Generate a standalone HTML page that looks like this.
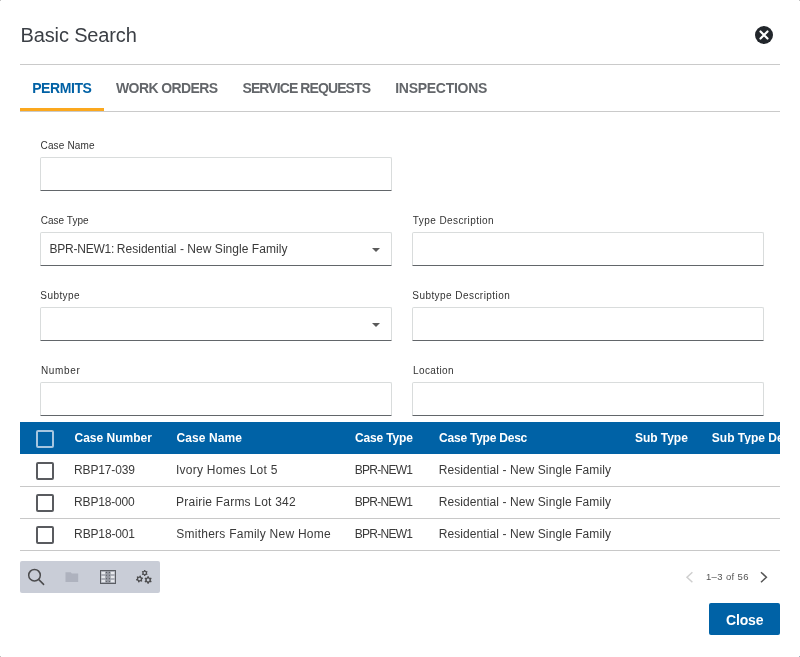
<!DOCTYPE html>
<html lang="en">
<head>
<meta charset="utf-8">
<title>Basic Search</title>
<style>
*{box-sizing:border-box;margin:0;padding:0}
html,body{width:800px;height:657px;overflow:hidden;background:#aaa;font-family:"Liberation Sans",sans-serif;}
#dlg{position:absolute;left:0;top:0;width:800px;height:657px;background:#fff;overflow:hidden}
.cp{position:absolute;width:1px;height:1px;background:#c2c2c2}
.abs{position:absolute;white-space:nowrap;line-height:1}
#txt{position:absolute;left:0;top:0;width:800px;height:657px;will-change:transform}
.ttl{color:#3b3f45}
#hline{left:20px;top:64px;width:760px;height:1px;background:#cacaca}
#tabline{left:20px;top:111px;width:760px;height:1px;background:#cacaca}
#tabul{left:20px;top:108px;width:84px;height:3px;background:#fba81e}
.tab{font-weight:bold;color:#63666a}
.tab.on{color:#0061a5}
.lbl{color:#333}
.inp{position:absolute;width:352px;height:34px;border:1px solid #d9dcdc;border-bottom:1px solid #62666a;border-radius:2px 2px 1px 1px;background:#fff}
.val{color:#3a3a3a}
.caret{position:absolute;width:0;height:0;border-left:4px solid transparent;border-right:4px solid transparent;border-top:4px solid #5a5a5a}
#thead{left:20px;top:422px;width:760px;height:32px;background:#0062a6;overflow:hidden}
.th{font-weight:bold;color:#fff}
.td{color:#3a3a3a}
.rline{left:20px;width:760px;height:1px;background:#c8c8c8}
.cb{position:absolute;left:36px;width:18px;height:18px;border:2px solid #595b5f;border-radius:2px;background:#fff}
.cb.h{border-color:#a6c6e0;background:transparent}
#tools{left:20px;top:561px;width:140px;height:32px;background:#c9cdd7;border-radius:2px}
#closebtn{left:709px;top:603px;width:71px;height:32px;background:#0062a6;border-radius:2px}
.pg{color:#555}
.cbt{color:#fff;font-weight:bold}
</style>
</head>
<body>
<div id="dlg">
<div class="cp" style="left:0;top:0"></div><div class="cp" style="left:799px;top:0"></div><div class="cp" style="left:0;top:656px"></div><div class="cp" style="left:799px;top:656px;background:#a3b2be"></div>
<svg class="abs" style="left:754px;top:25px" width="20" height="20" viewBox="0 0 20 20"><circle cx="10" cy="10" r="9" fill="#22262b"/><path d="M6.5 6.5 L13.5 13.5 M13.5 6.5 L6.5 13.5" stroke="#fff" stroke-width="2.2" stroke-linecap="round"/></svg>
<div class="abs" id="hline"></div>
<div class="abs" id="tabline"></div>
<div class="abs" id="tabul"></div>

<div class="inp" style="left:40px;top:157px"></div>

<div class="inp" style="left:40px;top:232px"></div>
<div class="caret" style="left:372px;top:248px"></div>
<div class="inp" style="left:412px;top:232px"></div>

<div class="inp" style="left:40px;top:307px"></div>
<div class="caret" style="left:372px;top:323px"></div>
<div class="inp" style="left:412px;top:307px"></div>

<div class="inp" style="left:40px;top:382px"></div>
<div class="inp" style="left:412px;top:382px"></div>

<div class="abs" id="thead"></div>
<div class="cb h" style="top:430px"></div>

<div class="cb" style="top:462px"></div>
<div class="abs rline" style="top:486px"></div>

<div class="cb" style="top:494px"></div>
<div class="abs rline" style="top:518px"></div>

<div class="cb" style="top:526px"></div>
<div class="abs rline" style="top:550px"></div>

<div class="abs" id="tools"></div>
<svg class="abs" style="left:20px;top:561px" width="140" height="32" viewBox="0 0 140 32">
<g fill="none" stroke="#4b4b4d" stroke-width="1.5"><circle cx="14.5" cy="14.2" r="5.8"/><path d="M18.8 18.6 L23.6 23.4" stroke-linecap="round"/></g>
<path d="M45.5 11.2 h5.2 l1.2 1.2 h6.3 v8.6 h-12.7 z" fill="#aeb2be"/>
<g><rect x="80.5" y="9.5" width="15" height="13" fill="#adb0b9" stroke="#5a5d63" stroke-width="1"/>
<rect x="85.5" y="10" width="5" height="12" fill="#9699a2"/><rect x="81.5" y="11" width="3.6" height="2" fill="#e6e8ec"/><rect x="90.8" y="11" width="3.6" height="2" fill="#e6e8ec"/><rect x="81.5" y="15" width="3.6" height="2" fill="#e6e8ec"/><rect x="90.8" y="15" width="3.6" height="2" fill="#e6e8ec"/><rect x="81.5" y="19" width="3.6" height="2" fill="#e6e8ec"/><rect x="90.8" y="19" width="3.6" height="2" fill="#e6e8ec"/><circle cx="86.4" cy="11.4" r="0.55" fill="#55585e"/><circle cx="89.4" cy="11.4" r="0.55" fill="#55585e"/><circle cx="86.4" cy="14.3" r="0.55" fill="#55585e"/><circle cx="89.4" cy="14.3" r="0.55" fill="#55585e"/><circle cx="86.4" cy="17.6" r="0.55" fill="#55585e"/><circle cx="89.4" cy="17.6" r="0.55" fill="#55585e"/><circle cx="86.4" cy="20.5" r="0.55" fill="#55585e"/><circle cx="89.4" cy="20.5" r="0.55" fill="#55585e"/></g>
<path fill="#4b4b4d" fill-rule="evenodd" d="M123.95 9.83 L124.16 8.95 L125.24 8.95 L125.45 9.83 L126.21 10.26 L127.07 10.01 L127.61 10.94 L126.96 11.56 L126.96 12.44 L127.61 13.06 L127.07 13.99 L126.21 13.74 L125.45 14.17 L125.24 15.05 L124.16 15.05 L123.95 14.17 L123.19 13.74 L122.33 13.99 L121.79 13.06 L122.44 12.44 L122.44 11.56 L121.79 10.94 L122.33 10.01 L123.19 10.26Z M123.55 12.00 a1.15 1.15 0 1 0 2.3 0 a1.15 1.15 0 1 0 -2.3 0Z M119.32 15.41 L119.81 14.51 L120.98 14.83 L120.95 15.84 L121.66 16.55 L122.67 16.52 L122.99 17.69 L122.09 18.18 L121.84 19.14 L122.37 20.01 L121.51 20.87 L120.64 20.34 L119.68 20.59 L119.19 21.49 L118.02 21.17 L118.05 20.16 L117.34 19.45 L116.33 19.48 L116.01 18.31 L116.91 17.82 L117.16 16.86 L116.63 15.99 L117.49 15.13 L118.36 15.66Z M118.20 18.00 a1.3 1.3 0 1 0 2.6 0 a1.3 1.3 0 1 0 -2.6 0Z M127.19 16.35 L127.44 15.26 L128.76 15.26 L129.01 16.35 L129.94 16.89 L131.01 16.56 L131.67 17.70 L130.85 18.47 L130.85 19.53 L131.67 20.30 L131.01 21.44 L129.94 21.11 L129.01 21.65 L128.76 22.74 L127.44 22.74 L127.19 21.65 L126.26 21.11 L125.19 21.44 L124.53 20.30 L125.35 19.53 L125.35 18.47 L124.53 17.70 L125.19 16.56 L126.26 16.89Z M126.70 19.00 a1.4 1.4 0 1 0 2.8 0 a1.4 1.4 0 1 0 -2.8 0Z"/>
</svg>
<svg class="abs" style="left:680px;top:567px" width="100" height="20" viewBox="0 0 100 20"><path d="M12.4 5.2 L7 10.2 L12.4 15.2" fill="none" stroke="#cfcfcf" stroke-width="1.5"/><path d="M81 5.2 L86.4 10.2 L81 15.2" fill="none" stroke="#555" stroke-width="1.5"/></svg>
<div class="abs" id="closebtn"></div>
<div id="txt">
<div class="abs t ttl" style="left:20.56px;top:25px;font-size:20px;letter-spacing:-0.140px">Basic Search</div>
<div class="abs t tab on" style="left:32.17px;top:81px;font-size:14px;letter-spacing:-0.419px">PERMITS</div>
<div class="abs t tab" style="left:116.00px;top:81px;font-size:14px;letter-spacing:-0.593px">WORK ORDERS</div>
<div class="abs t tab" style="left:242.44px;top:81px;font-size:14px;letter-spacing:-0.900px">SERVICE REQUESTS</div>
<div class="abs t tab" style="left:395.19px;top:81px;font-size:14px;letter-spacing:-0.268px">INSPECTIONS</div>
<div class="abs t lbl" style="left:40.55px;top:141px;font-size:10px;letter-spacing:0.146px">Case Name</div>
<div class="abs t lbl" style="left:40.66px;top:216px;font-size:10px;letter-spacing:0.038px">Case Type</div>
<div class="abs t val" style="left:49.55px;top:243px;font-size:12px;letter-spacing:-0.245px">BPR-NEW1:</div>
<div class="abs t val" style="left:116.71px;top:243px;font-size:12px;letter-spacing:0.044px">Residential - New Single Family</div>
<div class="abs t lbl" style="left:412.82px;top:216px;font-size:10px;letter-spacing:0.424px">Type Description</div>
<div class="abs t lbl" style="left:40.30px;top:291px;font-size:10px;letter-spacing:0.434px">Subtype</div>
<div class="abs t lbl" style="left:412.27px;top:291px;font-size:10px;letter-spacing:0.445px">Subtype Description</div>
<div class="abs t lbl" style="left:40.88px;top:366px;font-size:10px;letter-spacing:0.686px">Number</div>
<div class="abs t lbl" style="left:412.99px;top:366px;font-size:10px;letter-spacing:0.405px">Location</div>
<div class="abs t th" style="left:74.51px;top:432px;font-size:12px;letter-spacing:0.009px">Case Number</div>
<div class="abs t th" style="left:176.51px;top:432px;font-size:12px;letter-spacing:0.099px">Case Name</div>
<div class="abs t th" style="left:355.10px;top:432px;font-size:12px;letter-spacing:-0.167px">Case Type</div>
<div class="abs t th" style="left:439.10px;top:432px;font-size:12px;letter-spacing:-0.230px">Case Type Desc</div>
<div class="abs t th" style="left:635.04px;top:432px;font-size:12px;letter-spacing:-0.048px">Sub Type</div>
<div class="abs t th" style="left:711.80px;top:432px;font-size:12px;width:68.2px;overflow:hidden">Sub Type Desc</div>
<div class="abs t td" style="left:74.12px;top:464px;font-size:12px;letter-spacing:-0.156px">RBP17-039</div>
<div class="abs t td" style="left:175.98px;top:464px;font-size:12px;letter-spacing:0.248px">Ivory Homes Lot 5</div>
<div class="abs t td" style="left:354.66px;top:464px;font-size:12px;letter-spacing:-0.722px">BPR-NEW1</div>
<div class="abs t td" style="left:438.66px;top:464px;font-size:12px;letter-spacing:0.097px">Residential - New Single Family</div>
<div class="abs t td" style="left:74.12px;top:496px;font-size:12px;letter-spacing:-0.188px">RBP18-000</div>
<div class="abs t td" style="left:176.12px;top:496px;font-size:12px;letter-spacing:0.206px">Prairie Farms Lot 342</div>
<div class="abs t td" style="left:354.66px;top:496px;font-size:12px;letter-spacing:-0.722px">BPR-NEW1</div>
<div class="abs t td" style="left:438.66px;top:496px;font-size:12px;letter-spacing:0.097px">Residential - New Single Family</div>
<div class="abs t td" style="left:74.12px;top:528px;font-size:12px;letter-spacing:-0.141px">RBP18-001</div>
<div class="abs t td" style="left:176.22px;top:528px;font-size:12px;letter-spacing:0.251px">Smithers Family New Home</div>
<div class="abs t td" style="left:354.66px;top:528px;font-size:12px;letter-spacing:-0.722px">BPR-NEW1</div>
<div class="abs t td" style="left:438.66px;top:528px;font-size:12px;letter-spacing:0.097px">Residential - New Single Family</div>
<div class="abs t pg" style="left:705.99px;top:572px;font-size:9.5px;letter-spacing:0.355px">1–3 of 56</div>
<div class="abs t cbt" style="left:726.12px;top:613px;font-size:14px;letter-spacing:-0.198px">Close</div>
</div>
</div>
</body>
</html>
